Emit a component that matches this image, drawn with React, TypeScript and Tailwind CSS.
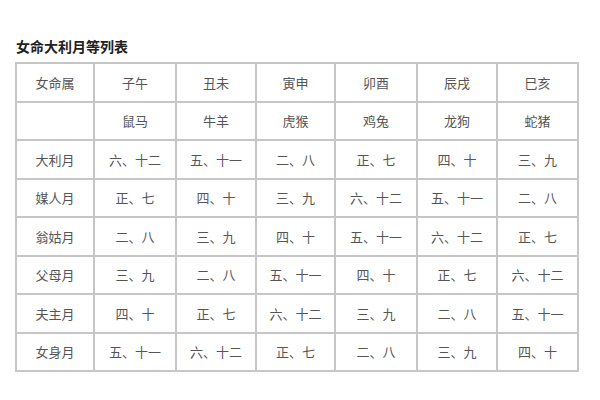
import React from 'react';

const widths = [78, 82, 80, 79, 82, 80, 81];

const rows: string[][] = [
  ['女命属', '子午', '丑未', '寅申', '卯酉', '辰戌', '巳亥'],
  ['', '鼠马', '牛羊', '虎猴', '鸡兔', '龙狗', '蛇猪'],
  ['大利月', '六、十二', '五、十一', '二、八', '正、七', '四、十', '三、九'],
  ['媒人月', '正、七', '四、十', '三、九', '六、十二', '五、十一', '二、八'],
  ['翁姑月', '二、八', '三、九', '四、十', '五、十一', '六、十二', '正、七'],
  ['父母月', '三、九', '二、八', '五、十一', '四、十', '正、七', '六、十二'],
  ['夫主月', '四、十', '正、七', '六、十二', '三、九', '二、八', '五、十一'],
  ['女身月', '五、十一', '六、十二', '正、七', '二、八', '三、九', '四、十'],
];

export default function App() {
  return (
    <div
      className="w-[600px] h-[400px] bg-white pl-[15px] pt-[37px] overflow-hidden"
      style={{ fontFamily: '"Noto Sans CJK SC", "Noto Sans", sans-serif' }}
    >
      <h1 className="text-[14px] leading-[18px] font-bold text-[#222] mb-[7px] pl-[1px]">
        女命大利月等列表
      </h1>
      <table className="border-collapse table-fixed w-[562px] border-2 border-[#c6c6c6]">
        <colgroup>
          {widths.map((w, i) => (
            <col key={i} style={{ width: w }} />
          ))}
        </colgroup>
        <tbody>
          {rows.map((row, r) => (
            <tr key={r} className="h-[38.5px]">
              {row.map((cell, c) => (
                <td
                  key={c}
                  className="border-2 border-[#c6c6c6] text-center align-middle text-[13px] text-[#555] p-0"
                >
                  {cell}
                </td>
              ))}
            </tr>
          ))}
        </tbody>
      </table>
    </div>
  );
}
